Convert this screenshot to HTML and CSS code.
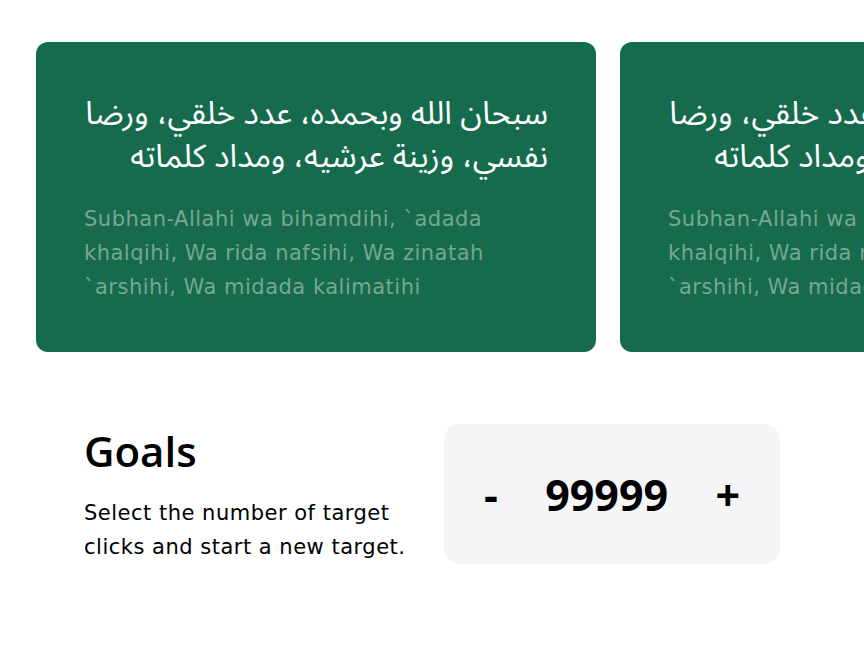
FILE: index.html
```html
<!DOCTYPE html>
<html lang="en">
<head>
<meta charset="utf-8">
<link rel="stylesheet" href="styles.css">
</head>
<body>
<div class="page">
  <div class="slider">
    <div class="card">
      <p class="arabic" dir="rtl">سبحان الله وبحمده، عدد خلقي، ورضا نفسي، وزينة عرشيه، ومداد كلماته</p>
      <p class="translit">Subhan-Allahi wa bihamdihi, `adada khalqihi, Wa rida nafsihi, Wa zinatah `arshihi, Wa midada kalimatihi</p>
    </div>
    <div class="card">
      <p class="arabic" dir="rtl">سبحان الله وبحمده، عدد خلقي، ورضا نفسي، وزينة عرشيه، ومداد كلماته</p>
      <p class="translit">Subhan-Allahi wa bihamdihi, `adada khalqihi, Wa rida nafsihi, Wa zinatah `arshihi, Wa midada kalimatihi</p>
    </div>
  </div>
  <div class="goals">
    <div class="goals-text">
      <h2 class="goals-title">Goals</h2>
      <p class="goals-desc">Select the number of target clicks and start a new target.</p>
    </div>
    <div class="counter">
      <span class="btn">-</span>
      <span class="value">99999</span>
      <span class="btn">+</span>
    </div>
  </div>
</div>
</body>
</html>
```
FILE: styles.css
```css
* { box-sizing: border-box; }
html, body { margin: 0; padding: 0; background: #fff; }
body { font-family: "DejaVu Sans", sans-serif; color: #000; }
.page { width: 864px; height: 648px; overflow: hidden; }
.slider { display: flex; gap: 24px; padding: 42px 0 0 36px; }
.card {
  flex: 0 0 560px; height: 310px; background: #166b4d; border-radius: 12px;
  padding: 51px 48px 0 48px;
}
.arabic {
  margin: 0; color: #fff; font-size: 32px; line-height: 43px;
  font-family: "Noto Sans Arabic", "Noto Sans", "DejaVu Sans", sans-serif;
  text-align: right;
}
.translit {
  margin: 23px 0 0; color: #76a791; font-size: 21px; line-height: 34px;
  letter-spacing: 0.5px;
  font-family: "DejaVu Sans", sans-serif;
}
.goals { display: flex; align-items: flex-start; padding: 72px 0 0 84px; gap: 16px; }
.goals-text { width: 344px; padding-top: 2px; }
.goals-title {
  margin: 0; font-family: "Open Sans", sans-serif;
  font-size: 42px; line-height: 50px; font-weight: 600;
}
.goals-desc { margin: 20px 0 0; font-size: 21px; line-height: 34px; letter-spacing: 0.5px; }
.counter {
  width: 336px; height: 140px; background: #f4f5f7; border-radius: 16px;
  display: flex; align-items: center; justify-content: space-between; padding: 0 40px;
  font-family: "Open Sans", sans-serif; font-size: 43px; font-weight: 700;
}
```
